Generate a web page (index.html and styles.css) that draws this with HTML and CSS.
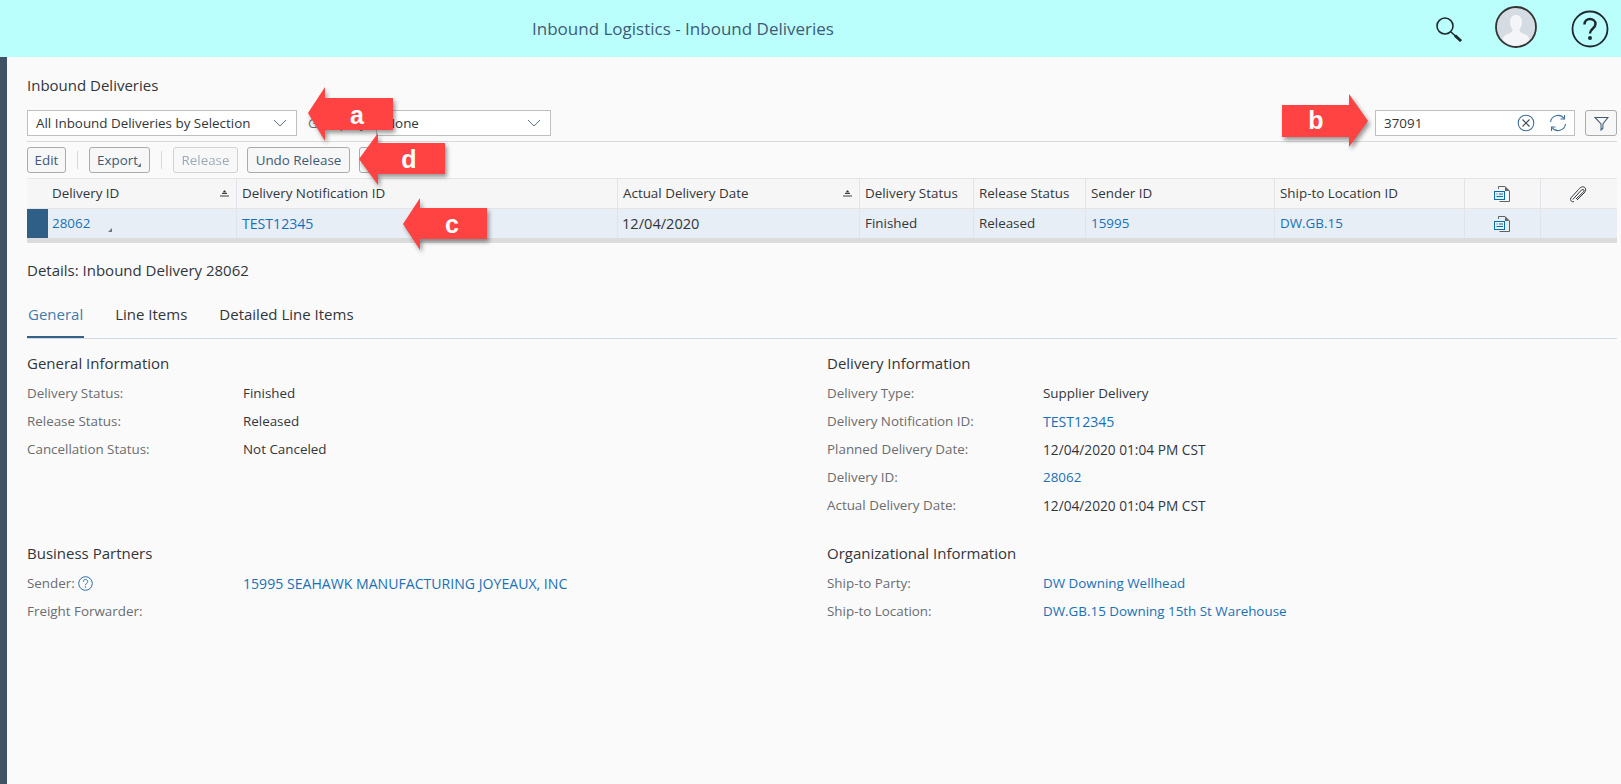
FILE: index.html
```html
<!DOCTYPE html>
<html lang="en">
<head>
<meta charset="utf-8">
<title>Inbound Deliveries</title>
<link rel="stylesheet" href="styles.css">
</head>
<body>
<svg class="defs" width="0" height="0" aria-hidden="true">
  <symbol id="doc" viewBox="0 0 16 16">
    <path d="M4.500 3V.5H11L15.500 5V15.500H5.500" fill="none" stroke="#5f6366"/>
    <path d="M11 .5V5H15.500Z" fill="#5f6366"/>
    <rect x=".5" y="5.500" width="10" height="8" fill="#e6f0f7" stroke="#0a6ea8"/>
    <path d="M2.500 8H3.500M5 8H9M2.500 10.500H9" stroke="#0a6ea8"/>
  </symbol>
  <symbol id="sort" viewBox="0 0 9 7">
    <path d="M4.500 0L6.500 2.500H2.500Z" fill="#3c3f42"/>
    <path d="M2 3.500H7M0 6H9" stroke="#3c3f42"/>
  </symbol>
</svg>
<header class="shell">
  <div class="shell-title">Inbound Logistics - Inbound Deliveries</div>
  <div class="shell-actions">
    <svg class="ico-search" viewBox="0 0 28 28"><circle cx="10" cy="10" r="8" fill="none" stroke="#1f2a30" stroke-width="1.600"/><path d="M16 16L26 25" stroke="#1f2a30" stroke-width="1.600"/><path d="M20 19.500L26 25" stroke="#1f2a30" stroke-width="3"/></svg>
    <svg class="ico-avatar" viewBox="0 0 42 42"><circle cx="21" cy="21" r="20" fill="#d5dbe2" stroke="#333" stroke-width="1.800"/><path d="M21 9c-4.500 0-6 3.500-6 7 0 3 1 5.500 2.500 7.500 0 2-1 3-3 3.800-3 1.100-6 2-7 6.200 4 4 9 6.500 13.500 6.500s9.500-2.500 13.500-6.500c-1-4.200-4-5.100-7-6.200-2-.8-3-1.800-3-3.800 1.500-2 2.500-4.500 2.500-7.500 0-3.500-1.500-7-6-7z" fill="#f3f5f8"/></svg>
    <svg class="ico-help" viewBox="0 0 38 38"><circle cx="19" cy="19" r="17.500" fill="none" stroke="#1f2a30" stroke-width="1.800"/><path d="M13.500 14.500c0-3.500 2.500-5.500 5.500-5.500s5.500 2 5.500 5c0 4.500-5.500 4.500-5.500 9.500" fill="none" stroke="#1f2a30" stroke-width="2.500"/><circle cx="19" cy="28" r="2" fill="#1f2a30"/></svg>
  </div>
</header>

<main class="page">
  <h1 class="list-title">Inbound Deliveries</h1>

  <div class="filter-bar">
    <div class="select select-view"><span>All Inbound Deliveries by Selection</span><svg class="chev" viewBox="0 0 14 8"><path d="M1 1L7 7L13 1" fill="none" stroke="#5b738b"/></svg></div>
    <span class="group-label">Group By:</span>
    <div class="select select-group"><span>None</span><svg class="chev" viewBox="0 0 14 8"><path d="M1 1L7 7L13 1" fill="none" stroke="#5b738b"/></svg></div>
    <div class="search">
      <span class="search-value">37091</span>
      <svg class="ico-clear" viewBox="0 0 18 18"><circle cx="9" cy="9" r="7.800" fill="none" stroke="#3f6f9c" stroke-width="1.100"/><path d="M5.500 5.500L12.500 12.500M12.500 5.500L5.500 12.500" stroke="#3a4a5c" stroke-width="1.100"/></svg>
      <svg class="ico-refresh" viewBox="0 0 18 18"><path d="M1.500 8A7.500 7.500 0 0 1 15 4.500M16.500 10A7.500 7.500 0 0 1 3 13.500" fill="none" stroke="#3f6f9c" stroke-width="1.100"/><path d="M15.500 1V5H11.500M2.500 17V13H6.500" fill="none" stroke="#3f6f9c" stroke-width="1.100"/></svg>
    </div>
    <button class="btn btn-filter"><svg class="ico-filter" viewBox="0 0 16 16"><path d="M1 1.500H15L9.500 8.500V13L7.500 15V8.500Z" fill="none" stroke="#3f5a75" stroke-width="1.100"/></svg></button>
  </div>

  <div class="toolbar">
    <button class="btn btn-edit">Edit</button>
    <span class="sep"></span>
    <button class="btn btn-menu">Export<i class="corner"></i></button>
    <span class="sep"></span>
    <button class="btn btn-off">Release</button>
    <button class="btn btn-undo">Undo Release</button>
    <button class="btn btn-hidden"></button>
  </div>

  <div class="table">
    <div class="tr thead">
      <div class="td first"><span>Delivery ID</span><svg class="sort"><use href="#sort"/></svg></div>
      <div class="td">Delivery Notification ID</div>
      <div class="td"><span>Actual Delivery Date</span><svg class="sort"><use href="#sort"/></svg></div>
      <div class="td">Delivery Status</div>
      <div class="td">Release Status</div>
      <div class="td">Sender ID</div>
      <div class="td">Ship-to Location ID</div>
      <div class="td center"><svg class="ico-doc"><use href="#doc"/></svg></div>
      <div class="td center"><svg class="ico-clip" viewBox="0 0 18 18"><path d="M5 16.500C3 17.500 .8 15.500 1.800 13L9.500 4.500C11.500 2 14 1 15.800 2.500C17.500 4 16.500 6.500 15 8L8 15M3.800 14.500L11.500 6C12.500 4.800 14 4 14.800 4.800C15.500 5.500 14.800 6.500 13.800 7.500L7 14" fill="none" stroke="#33373b" stroke-width="1"/></svg></div>
    </div>
    <div class="tr tbody">
      <div class="td first"><i class="selected"></i><a class="link">28062</a><i class="corner corner-row"></i></div>
      <div class="td"><a class="link code">TEST12345</a></div>
      <div class="td cell-date">12/04/2020</div>
      <div class="td">Finished</div>
      <div class="td">Released</div>
      <div class="td"><a class="link">15995</a></div>
      <div class="td"><a class="link">DW.GB.15</a></div>
      <div class="td center"><svg class="ico-doc"><use href="#doc"/></svg></div>
      <div class="td center"></div>
    </div>
  </div>

  <h2 class="details-title">Details: Inbound Delivery 28062</h2>

  <nav class="tabs">
    <a class="tab tab-on">General</a>
    <a class="tab">Line Items</a>
    <a class="tab">Detailed Line Items</a>
  </nav>

  <div class="form">
    <section class="group">
      <h3 class="group-title">General Information</h3>
      <div class="field"><span class="label">Delivery Status:</span><span class="value">Finished</span></div>
      <div class="field"><span class="label">Release Status:</span><span class="value">Released</span></div>
      <div class="field"><span class="label">Cancellation Status:</span><span class="value">Not Canceled</span></div>
    </section>
    <section class="group">
      <h3 class="group-title">Delivery Information</h3>
      <div class="field"><span class="label">Delivery Type:</span><span class="value">Supplier Delivery</span></div>
      <div class="field"><span class="label">Delivery Notification ID:</span><a class="link code">TEST12345</a></div>
      <div class="field"><span class="label">Planned Delivery Date:</span><span class="value date">12/04/2020 01:04 PM CST</span></div>
      <div class="field"><span class="label">Delivery ID:</span><a class="link">28062</a></div>
      <div class="field"><span class="label">Actual Delivery Date:</span><span class="value date">12/04/2020 01:04 PM CST</span></div>
    </section>
    <section class="group">
      <h3 class="group-title">Business Partners</h3>
      <div class="field"><span class="label">Sender: <svg class="ico-q" viewBox="0 0 15 15"><circle cx="7.500" cy="7.500" r="6.800" fill="none" stroke="#2a6ca8"/><path d="M5.300 5.800c0-1.500 1-2.300 2.200-2.300s2.200.8 2.200 2c0 1.800-2.200 1.800-2.200 3.700" fill="none" stroke="#2a6ca8"/><circle cx="7.500" cy="11" r=".7" fill="#2a6ca8"/></svg></span><a class="link code">15995 SEAHAWK MANUFACTURING JOYEAUX, INC</a></div>
      <div class="field"><span class="label">Freight Forwarder:</span></div>
    </section>
    <section class="group">
      <h3 class="group-title">Organizational Information</h3>
      <div class="field"><span class="label">Ship-to Party:</span><a class="link">DW Downing Wellhead</a></div>
      <div class="field"><span class="label">Ship-to Location:</span><a class="link">DW.GB.15 Downing 15th St Warehouse</a></div>
    </section>
  </div>
</main>

<svg class="annotations" viewBox="0 0 1621 784">
  <g class="arrow">
    <polygon points="308,113 325,87 325,98 393,98 393,130 325,130 325,141"/>
    <polygon points="359,159 378,133 378,143 445,143 445,174 378,174 378,185"/>
    <polygon points="403,224 420,198 420,208 487,208 487,239 420,239 420,250"/>
    <polygon points="1282,105 1349,105 1349,94 1368,121 1349,147 1349,137 1282,137"/>
  </g>
  <text class="letter" x="357" y="124">a</text>
  <text class="letter" x="409" y="168">d</text>
  <text class="letter" x="452" y="233">c</text>
  <text class="letter" x="1316" y="129">b</text>
</svg>
</body>
</html>
```

FILE: styles.css
```css
* { box-sizing: border-box; }

html, body {
  margin: 0;
  height: 100%;
  overflow: hidden;
}

body {
  position: relative;
  background: #fafafa;
  color: #32363a;
  font-family: "Open Sans", "Liberation Sans", sans-serif;
  font-size: 13.4px;
}

.defs { position: absolute; }

.shell {
  height: 57px;
  display: flex;
  align-items: center;
  justify-content: space-between;
  padding-left: 532px;
  background: #bbfffc;
}

.shell-title {
  font-size: 17px;
  color: #3f5a78;
}

.shell-actions {
  display: flex;
  align-items: center;
  padding-right: 12px;
}

.ico-search { width: 28px; height: 28px; margin-top: 2px; }
.ico-avatar { width: 42px; height: 42px; margin-left: 32px; margin-top: -3px; }
.ico-help { width: 38px; height: 38px; margin-left: 34px; }

.page {
  height: 727px;
  border-left: 7px solid #3e5366;
  padding: 19px 4px 0 20px;
}

.list-title {
  margin: 0;
  font-size: 15px;
  font-weight: 400;
  line-height: 18px;
}

.filter-bar {
  display: flex;
  align-items: center;
  margin-top: 16px;
  padding-bottom: 5px;
  border-bottom: 1px solid #d9d9d9;
}

.select {
  height: 26px;
  display: flex;
  align-items: center;
  justify-content: space-between;
  padding: 0 9px 0 8px;
  background: #fff;
  border: 1px solid #bfbfbf;
  color: #32363a;
}

.select-view { width: 270px; }
.select-group { width: 175px; }

.group-label {
  width: 79px;
  padding-left: 11px;
  white-space: nowrap;
  color: #6a6d70;
}

.chev { width: 14px; height: 8px; }

.search {
  width: 200px;
  height: 26px;
  margin-left: auto;
  display: flex;
  align-items: center;
  padding: 0 7px 0 8px;
  background: #fff;
  border: 1px solid #bfbfbf;
}

.search-value { flex: 1; }

.ico-clear { width: 18px; height: 18px; }
.ico-refresh { width: 18px; height: 18px; margin-left: 14px; }
.ico-filter { width: 15px; height: 15px; display: block; }

.btn {
  height: 26px;
  padding: 0;
  background: #f7f7f7;
  border: 1px solid #ababab;
  border-radius: 3px;
  color: #3f5a75;
  font: inherit;
  position: relative;
}

.btn-filter {
  width: 32px;
  margin-left: 10px;
  padding: 0 8px;
}

.toolbar {
  display: flex;
  align-items: center;
  height: 36px;
}

.sep {
  width: 1px;
  height: 18px;
  margin: 0 11px;
  background: #d9d9d9;
}

.btn-edit { width: 39px; }
.btn-menu { width: 61px; padding-right: 4px; }
.btn-off { width: 65px; opacity: .5; }
.btn-undo { width: 103px; margin-left: 9px; }
.btn-hidden { width: 66px; margin-left: 9px; }

.corner {
  position: absolute;
  right: 8px;
  bottom: 5px;
  border-left: 4px solid transparent;
  border-bottom: 4px solid #6a7a8a;
}

.tr {
  display: grid;
  grid-template-columns: 210px 381px 242px 114px 112px 189px 190px 76px 75px;
}

.thead {
  height: 31px;
  background: #f6f6f6;
  border-top: 1px solid #e5e5e5;
  border-bottom: 1px solid #e5e5e5;
}

.tbody {
  height: 34px;
  background: #e7eef6;
  border-bottom: 5px solid #dcdcdc;
}

.td {
  display: flex;
  align-items: center;
  justify-content: space-between;
  padding-left: 5px;
  padding-right: 7px;
  padding-bottom: 1px;
  border-right: 1px solid #e0e4e8;
  white-space: nowrap;
  min-width: 0;
  position: relative;
}

.first { padding-left: 25px; }
.center { justify-content: center; padding: 0 2px 0 0; }
.td:last-child { border-right: 0; }
.cell-date { font-size: 14.6px; padding-left: 4px; }

.sort { width: 9px; height: 7px; }

.selected {
  position: absolute;
  left: 0;
  top: 0;
  bottom: 0;
  width: 21px;
  background: #2f5f87;
}

.corner-row { right: 124px; bottom: 6px; }

.ico-doc { width: 16px; height: 16px; }
.ico-clip { width: 18px; height: 18px; }

.link { color: #1871b8; }
.value { color: #32363a; }
.label { color: #6a6d70; }
.date { font-size: 13.7px; }
.code { font-size: 14.1px; }

.details-title {
  margin: 17px 0 0;
  font-size: 15px;
  font-weight: 400;
  line-height: 20px;
}

.tabs {
  display: flex;
  gap: 30px;
  height: 59px;
  padding-top: 24px;
  border-bottom: 1px solid #cfdce8;
}

.tab {
  font-size: 15px;
  line-height: 20px;
  height: 34px;
  padding: 0 1px;
}

.tab-on {
  color: #427cac;
  border-bottom: 2px solid #346187;
}

.form {
  display: grid;
  grid-template-columns: 800px 1fr;
}

.group { padding: 14px 0 10px; }

.group-title {
  margin: 0 0 6px;
  font-size: 15px;
  font-weight: 400;
  line-height: 20px;
}

.field {
  display: grid;
  grid-template-columns: 216px 1fr;
  align-items: center;
  height: 28px;
}

.ico-q {
  width: 15px;
  height: 15px;
  vertical-align: -3px;
}

.annotations {
  position: absolute;
  left: 0;
  top: 0;
  width: 1621px;
  height: 784px;
  pointer-events: none;
}

.arrow polygon {
  fill: #ff4343;
  filter: drop-shadow(2px 3px 2px rgba(0, 0, 0, .4));
}

.letter {
  fill: #fff;
  font-family: "Liberation Sans", sans-serif;
  font-size: 25px;
  font-weight: 700;
  text-anchor: middle;
}
```
